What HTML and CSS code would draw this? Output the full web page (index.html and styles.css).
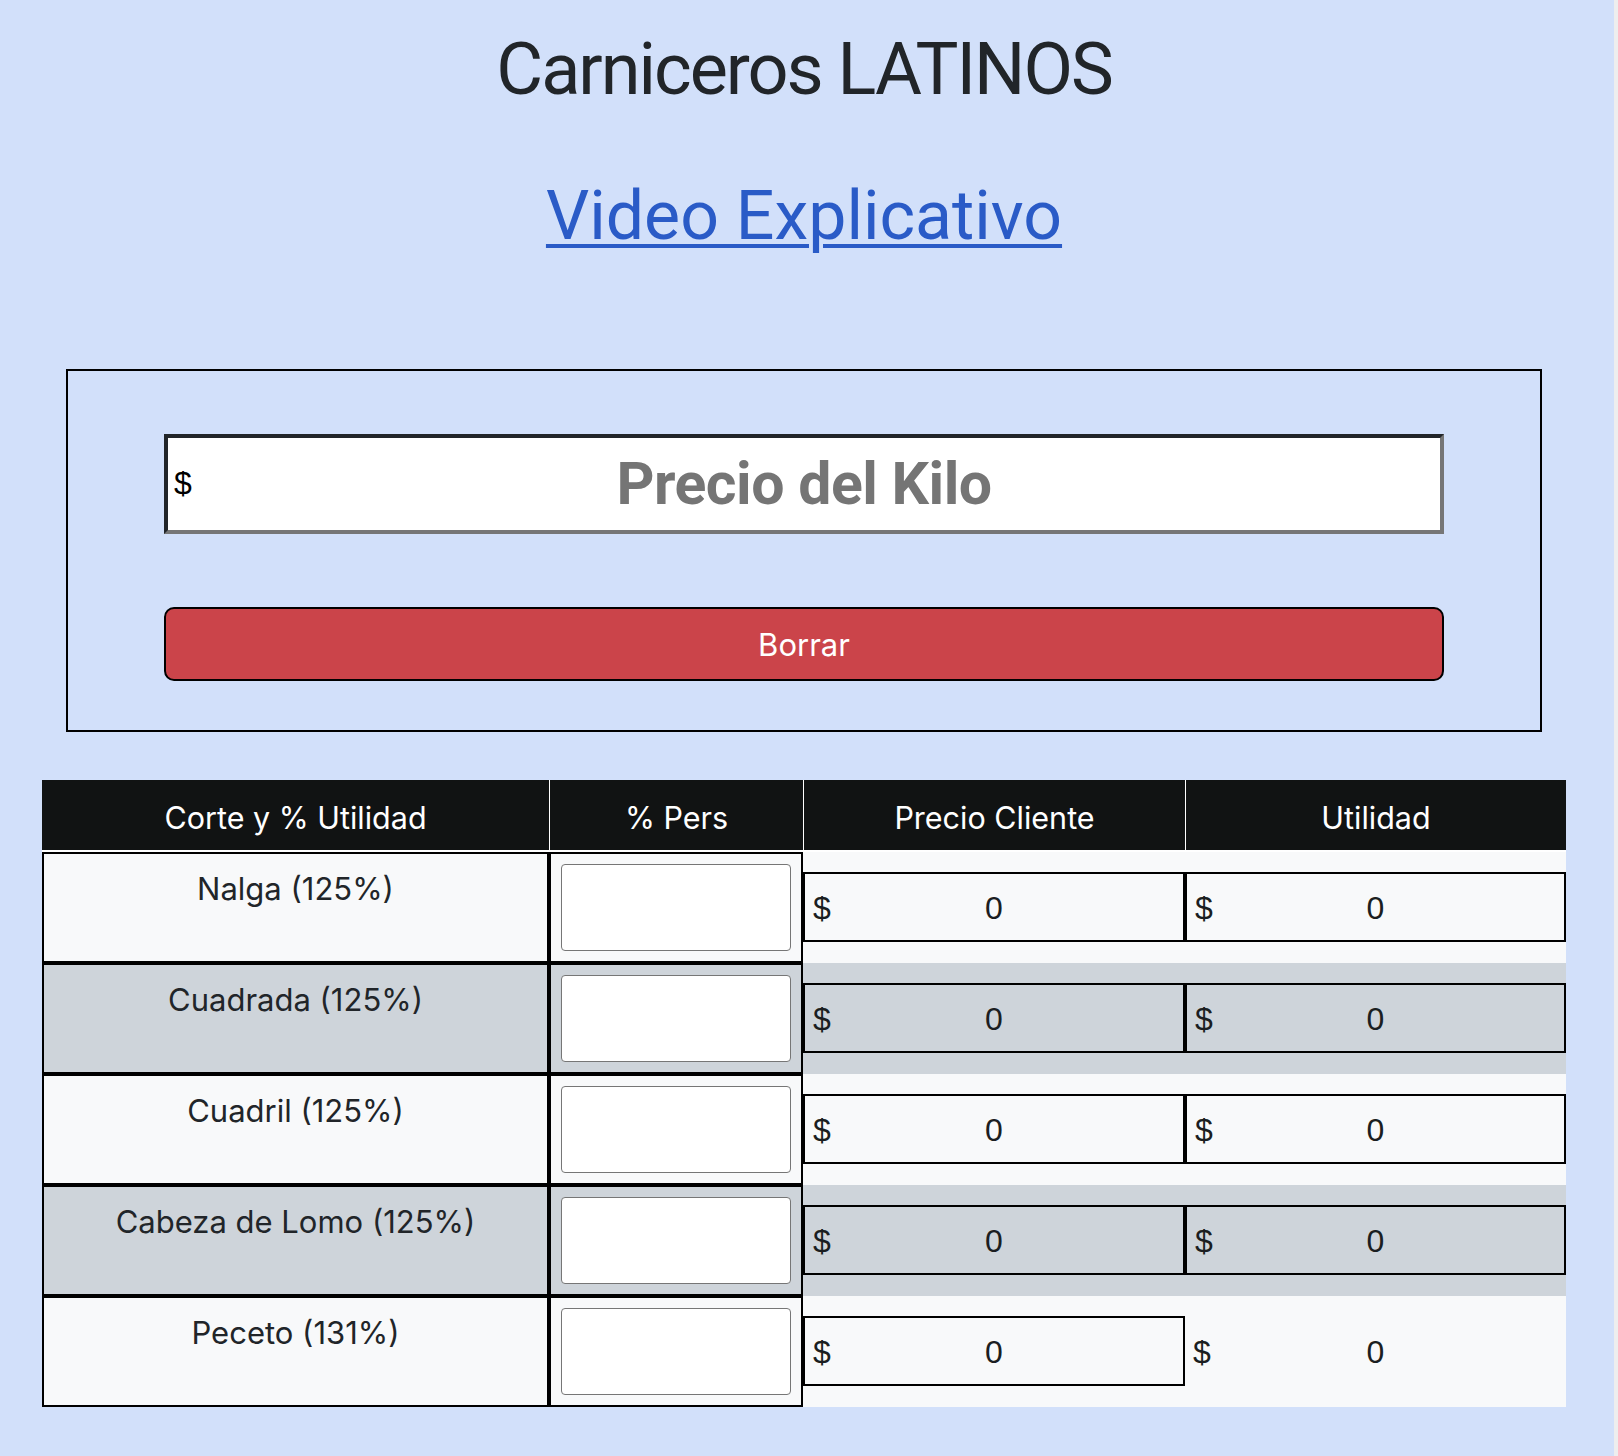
FILE: index.html
```html
<!DOCTYPE html>
<html lang="es">
<head>
<meta charset="utf-8">
<title>Carniceros LATINOS</title>
<link rel="stylesheet" href="styles.css">
</head>
<body>
<div class="page">
  <h1 class="title">Carniceros LATINOS</h1>
  <h2 class="video"><a href="#">Video Explicativo</a></h2>

  <section class="calc">
    <div class="price">
      <span class="cur">$</span>
      <input type="text" placeholder="Precio del Kilo">
      <span></span>
    </div>
    <button class="clear" type="button">Borrar</button>
  </section>

  <table class="cuts">
    <colgroup>
      <col class="c1"><col class="c2"><col class="c3"><col class="c4">
    </colgroup>
    <thead>
      <tr><th>Corte y % Utilidad</th><th>% Pers</th><th>Precio Cliente</th><th>Utilidad</th></tr>
    </thead>
    <tbody>
      <tr>
        <td class="cut">Nalga (125%)</td>
        <td class="pers"><input type="text"></td>
        <td class="money"><div class="out"><span class="cur">$</span><span class="val">0</span></div></td>
        <td class="money"><div class="out"><span class="cur">$</span><span class="val">0</span></div></td>
      </tr>
      <tr>
        <td class="cut">Cuadrada (125%)</td>
        <td class="pers"><input type="text"></td>
        <td class="money"><div class="out"><span class="cur">$</span><span class="val">0</span></div></td>
        <td class="money"><div class="out"><span class="cur">$</span><span class="val">0</span></div></td>
      </tr>
      <tr>
        <td class="cut">Cuadril (125%)</td>
        <td class="pers"><input type="text"></td>
        <td class="money"><div class="out"><span class="cur">$</span><span class="val">0</span></div></td>
        <td class="money"><div class="out"><span class="cur">$</span><span class="val">0</span></div></td>
      </tr>
      <tr>
        <td class="cut">Cabeza de Lomo (125%)</td>
        <td class="pers"><input type="text"></td>
        <td class="money"><div class="out"><span class="cur">$</span><span class="val">0</span></div></td>
        <td class="money"><div class="out"><span class="cur">$</span><span class="val">0</span></div></td>
      </tr>
      <tr>
        <td class="cut">Peceto (131%)</td>
        <td class="pers"><input type="text"></td>
        <td class="money"><div class="out"><span class="cur">$</span><span class="val">0</span></div></td>
        <td class="money"><div class="out bare"><span class="cur">$</span><span class="val">0</span></div></td>
      </tr>
    </tbody>
  </table>
</div>
</body>
</html>
```

FILE: styles.css
```css
html {
  background: #eeeeee;
}

body {
  margin: 0;
  width: 1614px;
  min-height: 100vh;
  background: #d2e0fa;
  font-family: Inter, "Noto Sans", sans-serif;
  color: #212529;
}

.page {
  width: 1608px;
  display: flex;
  flex-direction: column;
  align-items: center;
  padding-bottom: 49px;
}

.title {
  margin: 27px 0 0;
  font: 400 72px/1.2 Roboto, "Liberation Sans", sans-serif;
  letter-spacing: -2px;
  color: #212529;
}

.video {
  margin: 63px 0 0;
  font: 400 68px/1.2 Roboto, "Liberation Sans", sans-serif;
}

.video a {
  color: #2a5bc7;
  text-decoration: underline;
  text-decoration-thickness: 4px;
  text-underline-offset: 5px;
}

.calc {
  box-sizing: border-box;
  width: 1476px;
  height: 363px;
  margin-top: 111px;
  border: 2px solid #000;
  padding: 63px 96px 49px;
  display: flex;
  flex-direction: column;
  gap: 73px;
}

.price {
  box-sizing: border-box;
  height: 100px;
  display: grid;
  grid-template-columns: 48px 1fr 48px;
  align-items: center;
  background: #fff;
  border: 4px solid;
  border-color: #212529 #767676 #767676 #212529;
}

.price .cur {
  padding-left: 6px;
  font: 400 32px "Liberation Sans", Arial, sans-serif;
  color: #000;
}

.price input {
  width: 100%;
  min-width: 0;
  height: 80px;
  padding: 0;
  border: 0;
  outline: 0;
  background: transparent;
  text-align: center;
  font: 700 59px Roboto, "Liberation Sans", sans-serif;
  letter-spacing: -0.5px;
  color: #212529;
}

.price input::placeholder {
  color: #757575;
}

.clear {
  flex: none;
  height: 74px;
  border: 2px solid #000;
  border-radius: 10px;
  background: #cb444a;
  color: #fff;
  font: 400 31px/45px Inter, "Noto Sans", sans-serif;
  padding: 2px 0 0;
}

.cuts {
  margin-top: 48px;
  width: 1524px;
  border-collapse: separate;
  border-spacing: 0;
  table-layout: fixed;
}

.c1 { width: 507px; }
.c2 { width: 254px; }
.c3 { width: 382px; }
.c4 { width: 381px; }

.cuts th {
  background: #111313;
  color: #fff;
  font: 400 30.5px/45px Inter, "Noto Sans", sans-serif;
  padding: 15px 0 10px;
  border-bottom: 2px solid #fff;
  text-align: center;
}

.cuts th + th {
  border-left: 1px solid #fff;
}

.cuts tbody tr:nth-child(odd) td {
  background: #f8f9fa;
}

.cuts tbody tr:nth-child(even) td {
  background: #ced4da;
}

.cut,
.pers {
  border: 2px solid #000;
}

.cut {
  vertical-align: top;
  text-align: center;
  padding: 12px 8px 0;
  font: 400 31px/45px Inter, "Noto Sans", sans-serif;
  color: #212529;
}

.pers {
  padding: 10px;
}

.pers input {
  display: block;
  box-sizing: border-box;
  width: 100%;
  height: 87px;
  border: 1px solid #767676;
  border-radius: 4px;
  background: #fff;
}

.money {
  padding: 0;
  vertical-align: middle;
}

.out {
  box-sizing: border-box;
  height: 70px;
  padding-top: 2px;
  display: grid;
  grid-template-columns: 1fr auto 1fr;
  align-items: center;
  border: 2px solid #000;
  font: 400 32px "Liberation Sans", Arial, sans-serif;
  color: #1b1e21;
}

.out.bare {
  border: 0;
  height: 66px;
}

.out .cur {
  justify-self: start;
  padding-left: 8px;
}
```
